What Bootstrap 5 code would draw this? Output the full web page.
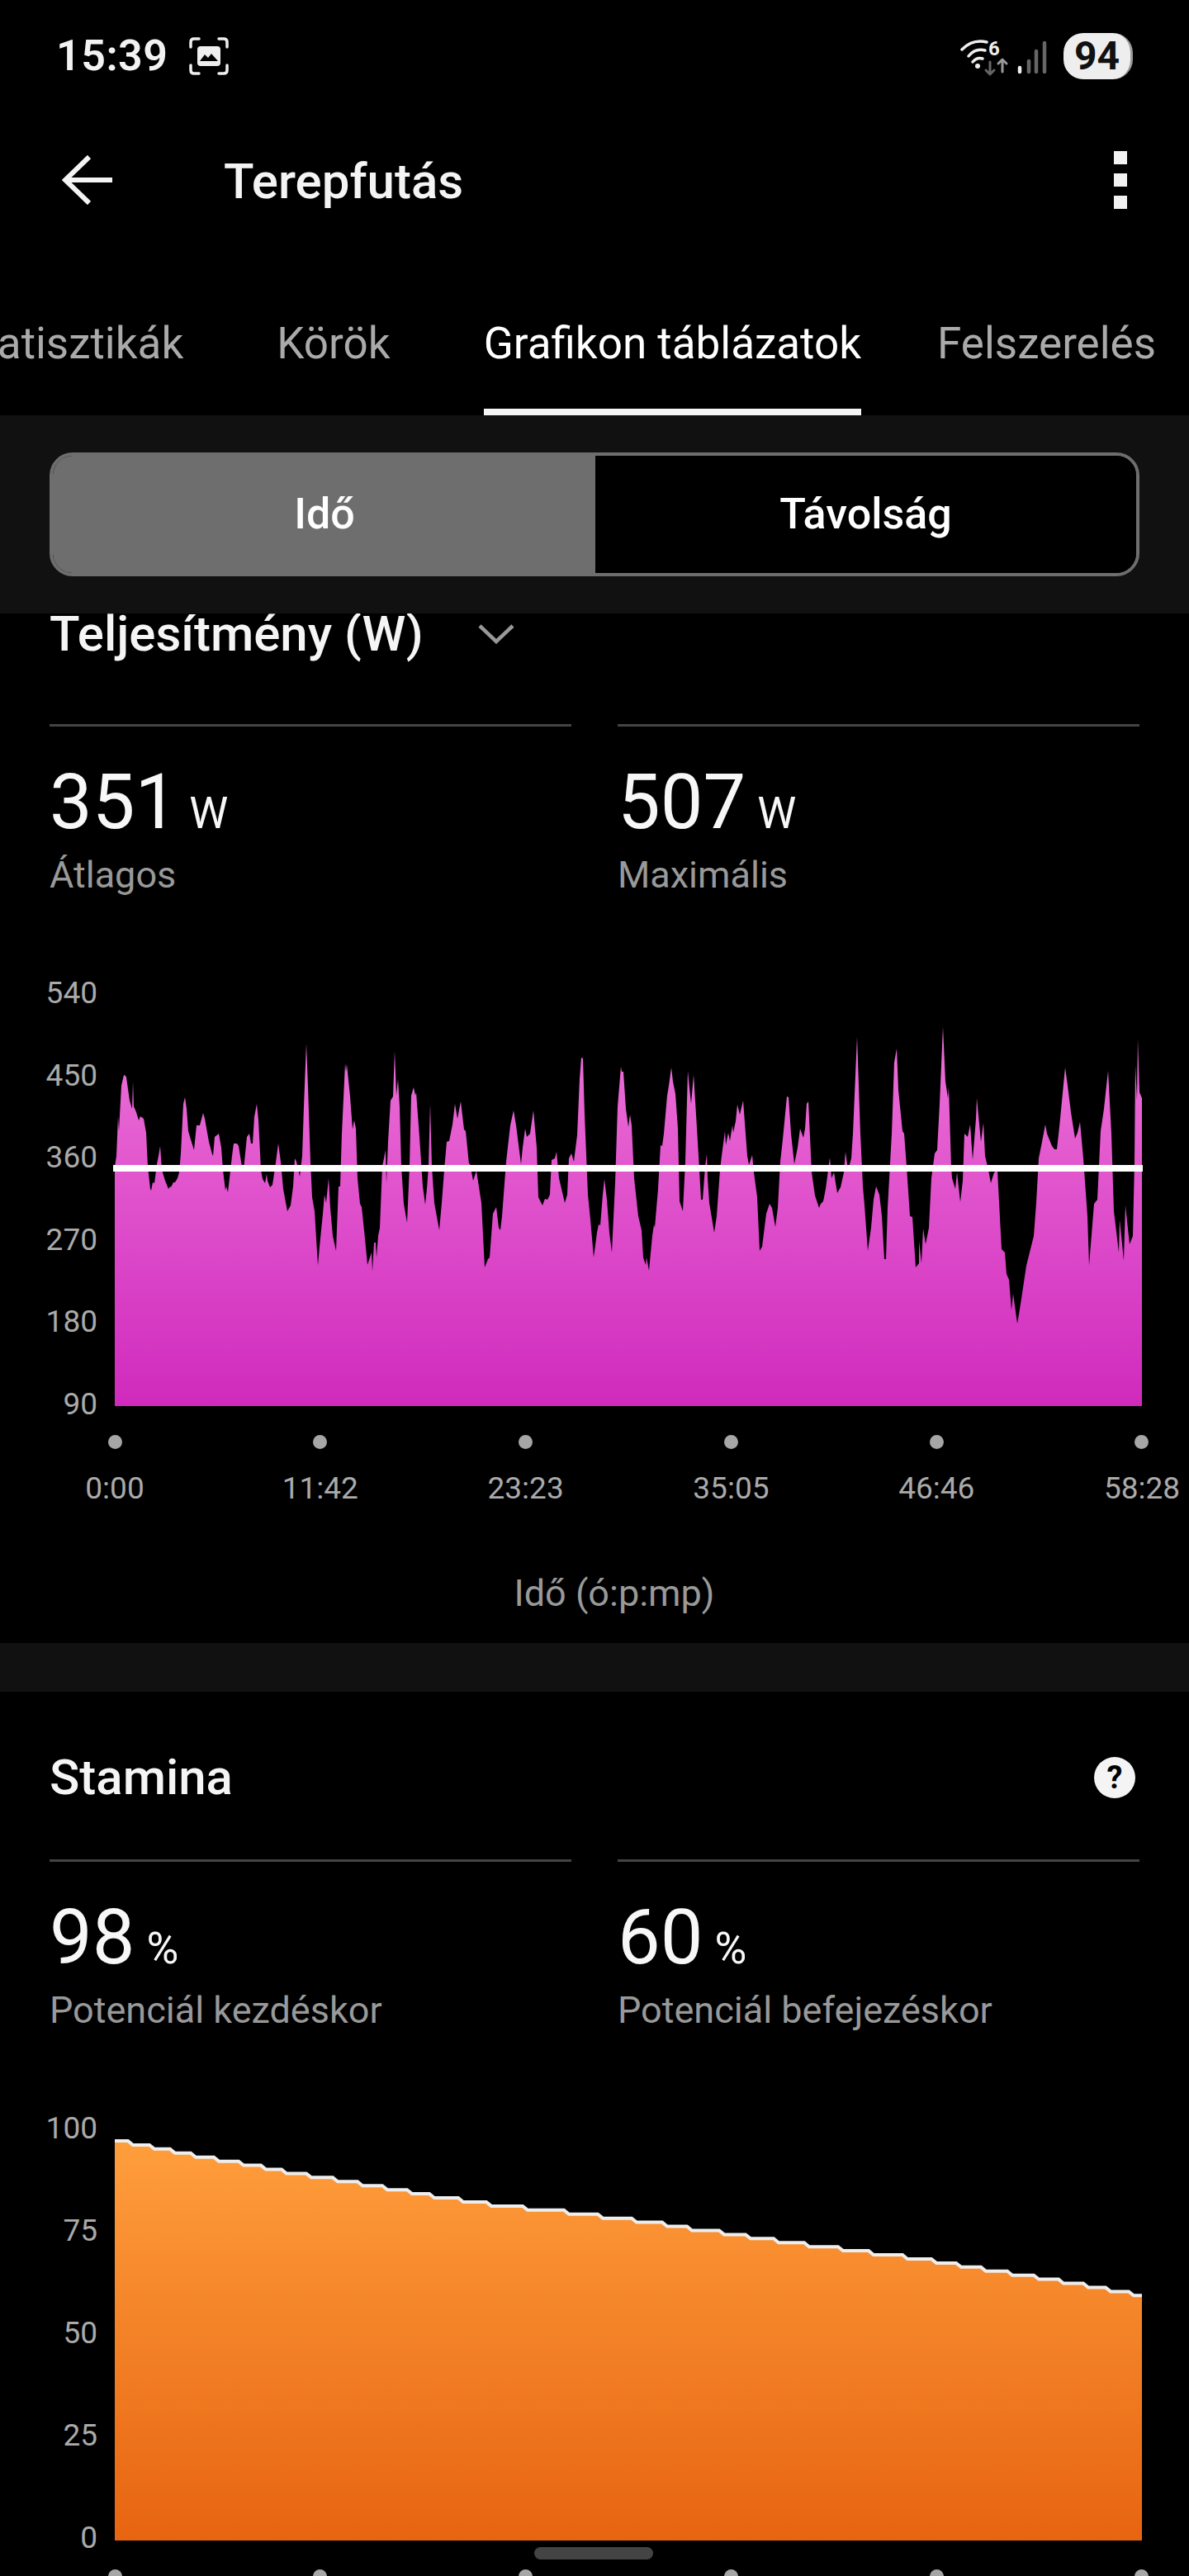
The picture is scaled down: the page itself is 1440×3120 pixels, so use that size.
<!DOCTYPE html>
<html lang="hu">
<head>
  <meta charset="UTF-8">
  <meta name="viewport" content="width=device-width, initial-scale=1">
  <title>Terepfutás</title>
  <link href="https://cdn.jsdelivr.net/npm/bootstrap@5.3.0/dist/css/bootstrap.min.css" rel="stylesheet">
  <style>
    html, body { background: #000; margin: 0; }
    body { font-family: Roboto, "Liberation Sans", sans-serif; color: #fff; }
    .phone { width: 1440px; height: 3120px; overflow: hidden; position: relative; background: #000; }

    .status-bar { height: 136px; padding: 0 68px; }
    .clock { font-size: 52px; font-weight: 600; color: #f2f2f2; letter-spacing: .5px; }
    .batt { width: 84px; height: 56px; margin-left: 20px; border-radius: 24px; background: #eee; color: #111; font-size: 48px; font-weight: 700; line-height: 56px; text-align: center; border-right: 3px solid #999; }
    .signal { margin-left: 7px; }

    .toolbar { height: 164px; padding: 0 75px; }
    .screen-title { font-size: 60px; font-weight: 500; color: #f4f4f4; margin: 4px 0 0 135px; line-height: 1; }
    .kebab { width: 16px; gap: 11px; }
    .kebab i { display: block; width: 16px; height: 16px; background: #f2f2f2; }

    .tabs-row { height: 203px; flex-wrap: nowrap; margin-left: -52px; gap: 113px; white-space: nowrap; }
    .tab-item { position: relative; height: 203px; padding-top: 84px; font-size: 53px; line-height: 64px; color: #aaa; }
    .tab-item.on { color: #fff; }
    .tab-item.on::after { content: ""; position: absolute; left: 0; right: 0; bottom: 0; height: 8px; background: #f5f5f5; }
    .tab-item.last { margin-left: -21px; }

    .sticky-band { position: relative; z-index: 2; height: 240px; background: #111; padding: 45px 60px; }
    .seg { height: 150px; width: 1320px; border: 4px solid #6e6e6e; border-radius: 28px; overflow: hidden; background: #000; }
    .seg .btn { font-size: 52px; font-weight: 500; color: #fff; border: 0; border-radius: 0; flex: 1 1 0; background: #000; }
    .seg .btn.on { flex: none; width: 658px; background: #6e6e6e; }

    .gap-band { height: 59px; background: #111; }
    .sec { padding: 0 60px; }
    .sec-title { height: 50px; line-height: 50px; font-size: 60px; font-weight: 500; color: #f5f5f5; margin: 0; }
    .chevron { margin-left: 66px; }
    .head-a { margin-bottom: 84px; }
    .head-b { margin-top: 79px; margin-bottom: 74px; }
    .stat-row { --bs-gutter-x: 56px; }
    .stat-top { border-top: 3px solid #444; padding-top: 42px; }
    .stat-val { height: 100px; line-height: 100px; font-size: 92px; color: #f7f7f7; }
    .stat-val span { font-size: 53px; margin-left: 14px; }
    .stat-lbl { height: 50px; line-height: 50px; margin-top: 13px; font-size: 45px; color: #999; }

    .chart-box { margin: 98px -60px 0 -60px; }
    .y-axis { flex: none; width: 118px; margin-right: 21px; font-size: 37px; line-height: 40px; color: #aaa; text-align: right; }
    .y-a { height: 538px; }
    .y-b { height: 536px; }
    .plot { flex: none; width: 1244px; }
    .plot svg { display: block; overflow: visible; }
    .plot-a { margin-top: 57px; }
    .plot-b { margin-top: 27px; }
    .ticks { margin-top: 35px; }
    .tick { width: 0; white-space: nowrap; font-size: 37px; line-height: 40px; color: #aaa; }
    .tick i { display: block; flex: none; width: 17px; height: 17px; border-radius: 50%; background: #a6a6a6; margin-bottom: 28px; }
    .axis-name { height: 50px; line-height: 50px; margin-top: 82px; font-size: 45px; color: #999; text-align: center; margin-bottom: 35px; padding-left: 48px; }

    .help { width: 50px; height: 50px; border-radius: 50%; background: #f4f4f4; color: #000; font-size: 38px; font-weight: 700; line-height: 50px; text-align: center; margin-right: 5px; }
    .home-pill { position: absolute; left: 647px; top: 3085px; width: 144px; height: 15px; border-radius: 8px; background: #444; }
  </style>
</head>
<body>
<div class="phone">

  <div class="status-bar d-flex align-items-center">
    <span class="clock">15:39</span>
    <svg class="ms-4" width="50" height="48" viewBox="0 0 50 48" fill="none" stroke="#eee" stroke-width="3.5" stroke-linecap="round">
      <path d="M3 13V7q0-4 4-4h6M37 3h6q4 0 4 4v6M3 35v6q0 4 4 4h6M47 35v6q0 4-4 4h-6"/>
      <rect x="11" y="12" width="28" height="24" rx="4" fill="#eee" stroke="none"/>
      <path d="M14 30l6-8 4 4 4-5 8 9z" fill="#000" stroke="none"/>
    </svg>
    <div class="ms-auto d-flex align-items-center">
      <svg width="62" height="56" viewBox="0 0 62 56" fill="none" stroke-linecap="round">
        <g stroke="#eee" stroke-width="3.5">
          <path d="M2 20Q15 7 32 11"/>
          <path d="M10 28Q18 18 30 21"/>
          <path d="M15 35Q20 29 27 31"/>
        </g>
        <circle cx="21" cy="40" r="3" fill="#eee"/>
        <path d="M36 35V50M31 45l5 5 5-5" stroke="#666" stroke-width="3" stroke-linejoin="round"/>
        <path d="M51 47V32M46 37l5-5 5 5" stroke="#999" stroke-width="3" stroke-linejoin="round"/>
        <text x="34" y="27" font-family="Roboto" font-weight="700" font-size="24" fill="#eee">6</text>
      </svg>
      <svg class="signal" width="36" height="56" viewBox="0 0 36 56" stroke-linecap="round" stroke-width="4.5">
        <path d="M3 47V42" stroke="#eee"/>
        <path d="M14 47V34" stroke="#666"/>
        <path d="M23 47V22" stroke="#666"/>
        <path d="M33 47V12" stroke="#666"/>
      </svg>
      <div class="batt">94</div>
    </div>
  </div>

  <div class="toolbar d-flex align-items-center">
    <svg width="61" height="60" viewBox="0 0 61 60" fill="none" stroke="#f4f4f4" stroke-width="6">
      <path d="M33 2 4 30l29 28M4 30h57"/>
    </svg>
    <h1 class="screen-title">Terepfutás</h1>
    <div class="kebab d-flex flex-column ms-auto"><i></i><i></i><i></i></div>
  </div>

  <nav class="nav tabs-row">
    <a class="tab-item text-decoration-none">Statisztikák</a>
    <a class="tab-item text-decoration-none">Körök</a>
    <a class="tab-item on text-decoration-none">Grafikon táblázatok</a>
    <a class="tab-item last text-decoration-none">Felszerelés</a>
  </nav>

  <div class="sticky-band">
    <div class="btn-group seg">
      <button type="button" class="btn on">Idő</button>
      <button type="button" class="btn">Távolság</button>
    </div>
  </div>

  <section class="sec">
    <div class="d-flex align-items-center head-a">
      <h2 class="sec-title">Teljesítmény (W)</h2>
      <svg class="chevron" width="44" height="24" viewBox="0 0 44 24" fill="none" stroke="#999" stroke-width="4.5">
        <path d="M2 2l20 19L42 2"/>
      </svg>
    </div>
    <div class="row stat-row">
      <div class="col-6"><div class="stat-top">
        <div class="stat-val">351<span>W</span></div>
        <div class="stat-lbl">Átlagos</div>
      </div></div>
      <div class="col-6"><div class="stat-top">
        <div class="stat-val">507<span>W</span></div>
        <div class="stat-lbl">Maximális</div>
      </div></div>
    </div>
    <div class="chart-box d-flex">
      <div class="y-axis y-a d-flex flex-column justify-content-between">
        <div>540</div><div>450</div><div>360</div><div>270</div><div>180</div><div>90</div>
      </div>
      <div class="plot">
        <svg class="plot-a" width="1244" height="463" viewBox="139 1240 1244 463">
          <defs>
            <linearGradient id="pinkFill" x1="0" y1="0" x2="0" y2="1">
              <stop offset="0" stop-color="#ec72d8"/>
              <stop offset="1" stop-color="#d02abd"/>
            </linearGradient>
          </defs>
          <polygon fill="url(#pinkFill)" points="139,1703 139,1413 141,1400 143,1352 144,1370 147,1315 150,1302 152,1303 153,1305 157,1333 160,1343 161,1310 162,1340 165,1347 168,1357 170,1352 174,1355 177,1372 179,1413 182,1440 183,1442 185,1432 187,1433 190,1410 192,1400 194,1388 196,1417 200,1430 204,1440 206,1437 207,1438 210,1432 212,1432 215,1427 217,1420 219,1397 222,1337 224,1329 226,1343 228,1370 231,1380 235,1393 238,1363 242,1363 246,1348 248,1355 253,1383 257,1398 258,1400 260,1377 265,1373 268,1390 270,1417 273,1442 274,1437 276,1444 278,1427 281,1400 283,1385 287,1385 289,1388 292,1407 294,1418 295,1418 297,1397 299,1377 302,1373 304,1385 306,1385 308,1353 311,1337 313,1357 316,1417 318,1428 321,1433 323,1422 324,1430 327,1438 330,1435 334,1408 337,1385 340,1407 343,1440 348,1467 352,1460 355,1437 357,1403 359,1407 362,1420 363,1425 366,1400 368,1340 371,1264 373,1317 376,1407 378,1450 381,1467 385,1533 387,1510 391,1470 393,1447 395,1457 398,1427 400,1463 403,1497 407,1515 410,1437 412,1437 414,1373 418,1288 419,1298 420,1289 424,1328 427,1368 429,1357 431,1367 433,1427 436,1458 438,1462 442,1500 445,1532 450,1517 451,1540 453,1505 455,1505 456,1523 458,1497 460,1487 463,1413 467,1393 468,1433 470,1383 473,1333 476,1328 478,1273 480,1327 482,1307 484,1340 486,1413 489,1458 493,1481 496,1413 498,1327 501,1317 503,1327 504,1323 508,1377 512,1437 515,1459 517,1440 519,1413 521,1337 523,1413 526,1457 532,1490 535,1457 538,1417 541,1383 544,1382 548,1362 551,1337 554,1355 558,1334 562,1368 564,1370 568,1410 569,1409 573,1430 577,1418 583,1457 587,1535 591,1525 593,1523 597,1470 601,1462 604,1487 606,1490 608,1473 613,1407 618,1363 622,1345 625,1363 631,1410 633,1390 636,1367 638,1377 642,1373 646,1345 650,1390 652,1450 657,1460 660,1452 663,1453 666,1447 668,1405 672,1403 674,1395 677,1427 684,1457 687,1447 689,1403 692,1397 695,1407 699,1375 702,1307 704,1281 706,1282 708,1350 712,1447 715,1477 719,1523 723,1493 725,1483 727,1484 730,1447 732,1428 735,1453 738,1493 741,1517 745,1433 748,1340 752,1292 753,1298 755,1298 758,1343 761,1365 763,1350 765,1363 768,1427 773,1473 777,1490 779,1523 782,1532 783,1523 786,1539 790,1497 792,1483 793,1487 797,1440 800,1387 802,1388 804,1373 808,1327 810,1315 813,1293 815,1310 818,1325 821,1367 823,1455 827,1467 830,1407 833,1297 835,1318 837,1337 840,1302 843,1350 846,1400 849,1453 851,1453 854,1413 856,1398 857,1427 859,1457 865,1493 868,1473 872,1417 874,1400 878,1370 879,1387 882,1372 884,1382 887,1363 888,1372 891,1358 893,1338 896,1350 900,1333 905,1400 907,1411 911,1399 913,1420 917,1450 920,1515 923,1510 928,1470 932,1458 935,1463 939,1486 942,1463 945,1407 948,1380 953,1328 955,1329 958,1373 962,1410 966,1390 969,1367 973,1378 975,1367 977,1337 979,1334 983,1420 987,1448 992,1463 994,1458 997,1455 1000,1440 1005,1402 1007,1427 1010,1420 1014,1445 1018,1438 1022,1420 1024,1395 1027,1418 1031,1403 1033,1373 1038,1256 1042,1373 1045,1437 1047,1460 1051,1515 1055,1487 1058,1453 1061,1437 1065,1447 1068,1473 1071,1525 1073,1525 1075,1463 1080,1373 1083,1287 1086,1270 1088,1320 1093,1370 1095,1373 1098,1413 1102,1473 1105,1474 1109,1535 1113,1530 1113,1503 1116,1530 1118,1488 1121,1507 1125,1487 1128,1427 1132,1397 1135,1393 1138,1337 1142,1244 1145,1310 1148,1330 1149,1317 1152,1413 1153,1427 1157,1440 1159,1420 1163,1456 1166,1430 1168,1373 1172,1377 1175,1362 1178,1405 1182,1355 1183,1330 1188,1383 1191,1360 1193,1400 1197,1417 1200,1433 1204,1420 1208,1418 1213,1513 1217,1517 1219,1543 1222,1550 1225,1587 1227,1567 1232,1603 1234,1592 1237,1573 1243,1533 1247,1517 1252,1497 1255,1457 1258,1403 1262,1383 1266,1362 1268,1373 1274,1388 1277,1392 1280,1392 1283,1365 1290,1293 1293,1315 1297,1347 1302,1379 1305,1372 1308,1359 1312,1403 1317,1473 1319,1533 1325,1458 1329,1453 1333,1370 1337,1343 1342,1297 1346,1373 1349,1467 1355,1517 1356,1477 1361,1527 1363,1460 1368,1507 1372,1497 1374,1407 1375,1290 1377,1333 1378,1258 1380,1323 1383,1330 1383,1703"/>
          <rect x="137" y="1411" width="1247" height="8" fill="#fff"/>
        </svg>
        <div class="ticks d-flex justify-content-between">
          <div class="tick d-flex flex-column align-items-center"><i></i>0:00</div>
          <div class="tick d-flex flex-column align-items-center"><i></i>11:42</div>
          <div class="tick d-flex flex-column align-items-center"><i></i>23:23</div>
          <div class="tick d-flex flex-column align-items-center"><i></i>35:05</div>
          <div class="tick d-flex flex-column align-items-center"><i></i>46:46</div>
          <div class="tick d-flex flex-column align-items-center"><i></i>58:28</div>
        </div>
      </div>
    </div>
    <div class="axis-name">Idő (ó:p:mp)</div>
  </section>

  <div class="gap-band"></div>

  <section class="sec">
    <div class="d-flex align-items-center head-b">
      <h2 class="sec-title">Stamina</h2>
      <div class="help ms-auto">?</div>
    </div>
    <div class="row stat-row">
      <div class="col-6"><div class="stat-top">
        <div class="stat-val">98<span>%</span></div>
        <div class="stat-lbl">Potenciál kezdéskor</div>
      </div></div>
      <div class="col-6"><div class="stat-top">
        <div class="stat-val">60<span>%</span></div>
        <div class="stat-lbl">Potenciál befejezéskor</div>
      </div></div>
    </div>
    <div class="chart-box d-flex">
      <div class="y-axis y-b d-flex flex-column justify-content-between">
        <div>100</div><div>75</div><div>50</div><div>25</div><div>0</div>
      </div>
      <div class="plot">
        <svg class="plot-b" width="1244" height="492" viewBox="139 2585 1244 492">
          <defs>
            <linearGradient id="orangeFill" x1="0" y1="0" x2="0" y2="1">
              <stop offset="0" stop-color="#ff9e3c"/>
              <stop offset="1" stop-color="#e76410"/>
            </linearGradient>
          </defs>
          <path id="staminaArea" fill="url(#orangeFill)"/>
          <path id="staminaLine" fill="none" stroke="#eee" stroke-width="4"/>
        </svg>
        <div class="ticks d-flex justify-content-between">
          <div class="tick d-flex flex-column align-items-center"><i></i></div>
          <div class="tick d-flex flex-column align-items-center"><i></i></div>
          <div class="tick d-flex flex-column align-items-center"><i></i></div>
          <div class="tick d-flex flex-column align-items-center"><i></i></div>
          <div class="tick d-flex flex-column align-items-center"><i></i></div>
          <div class="tick d-flex flex-column align-items-center"><i></i></div>
        </div>
      </div>
    </div>
  </section>

  <div class="home-pill"></div>
</div>

<script src="https://cdn.jsdelivr.net/npm/bootstrap@5.3.0/dist/js/bootstrap.bundle.min.js"></script>
<script>
  // x where the stamina line drops one level
  const drops = [158,184,209,234,262,292,319,344,374,406,436,466,496,523,558,592,636,686,727,768,805,835,874,906,940,977,1018,1055,1096,1131,1161,1191,1223,1255,1285,1315,1342,1370];
  let y = 2593;
  let line = 'M139 ' + y;
  drops.forEach(x => {
    line += ' L' + (x - 3) + ' ' + y;
    y += 4.93;
    line += ' L' + (x + 3) + ' ' + y;
  });
  line += ' L1383 ' + y;
  document.getElementById('staminaLine').setAttribute('d', line);
  document.getElementById('staminaArea').setAttribute('d', line + ' V3077 H139 Z');
</script>
</body>
</html>
